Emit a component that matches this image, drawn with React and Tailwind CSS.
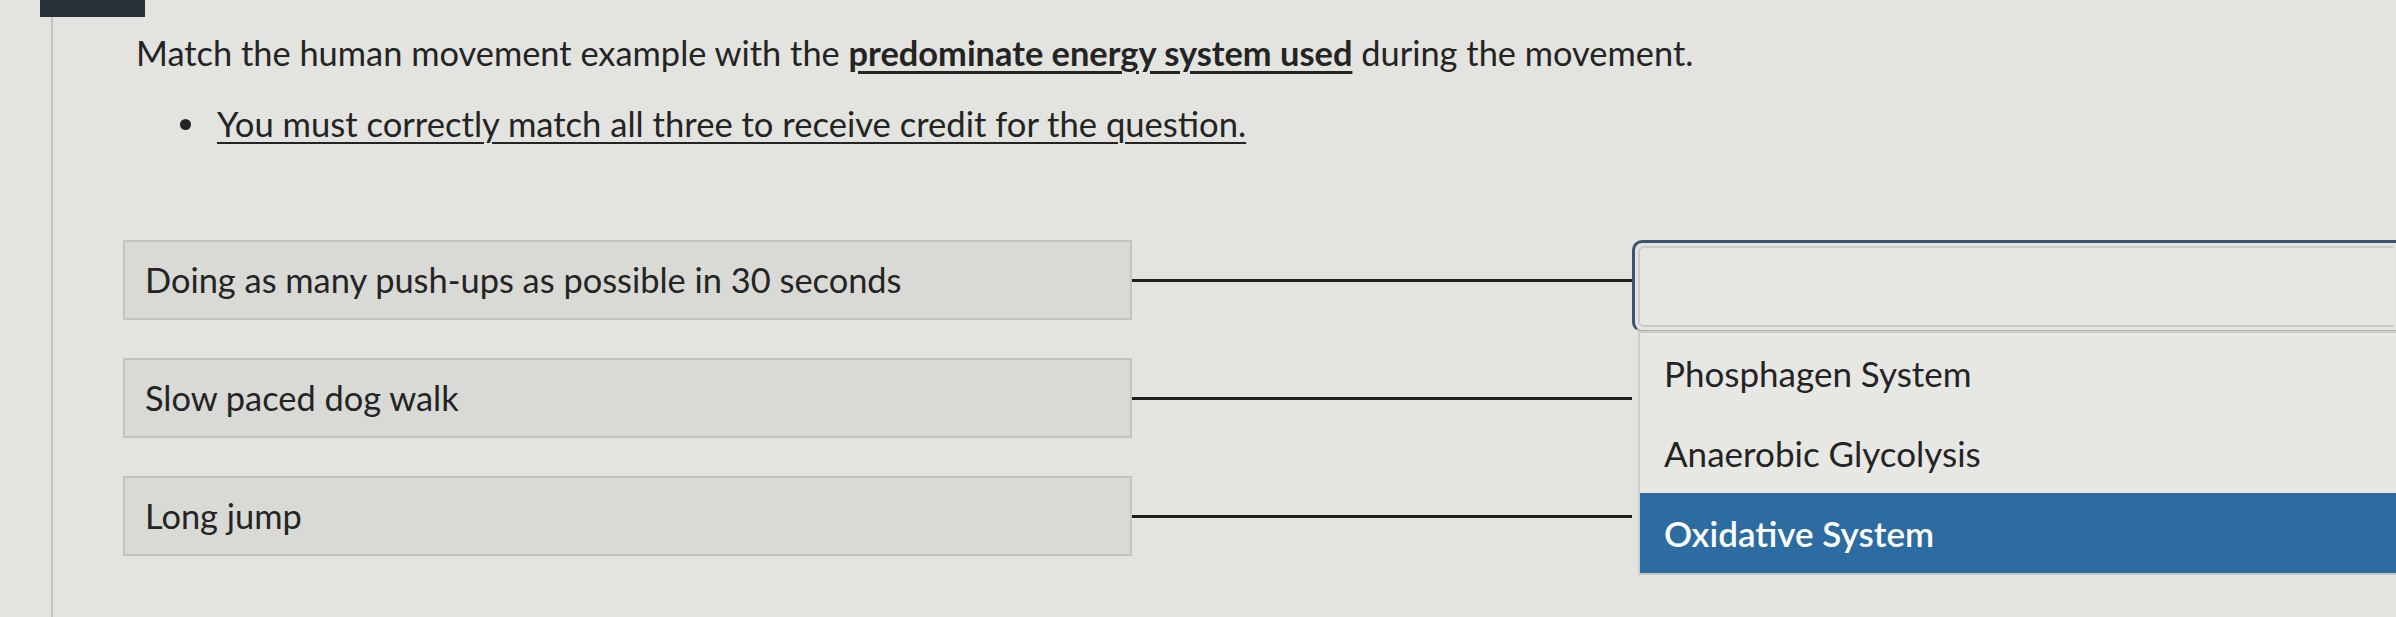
export default function App() {
  const items = [
    { label: 'Doing as many push-ups as possible in 30 seconds', first: true },
    { label: 'Slow paced dog walk' },
    { label: 'Long jump' },
  ];
  const options = ['Phosphagen System', 'Anaerobic Glycolysis', 'Oxidative System'];

  return (
    <div
      className="w-[2396px] h-[617px] overflow-hidden bg-[#e3e3e0] text-[#242424] flex flex-col"
      style={{ fontFamily: 'Lato, "Open Sans", sans-serif' }}
    >
      {/* top bar piece */}
      <div className="h-[17px] shrink-0">
        <div className="ml-[40px] w-[105px] h-[17px] bg-[#2a3038]" />
      </div>

      {/* question body */}
      <div className="flex-1 ml-[51px] border-l-2 border-[#c2c2bf] pl-[70px] pt-[16px]">
        <p className="ml-[13px] text-[34.4px] leading-[40px] whitespace-nowrap">
          Match the human movement example with the{' '}
          <span className="font-bold underline decoration-[3px] underline-offset-[5px]">predominate energy system used</span>{' '}
          during the movement.
        </p>

        <div className="mt-[31px] ml-[57px] flex items-center gap-[26px] text-[34.6px] leading-[40px]">
          <span className="w-[11px] h-[11px] rounded-full bg-[#242424]" />
          <span className="underline decoration-2 underline-offset-[5px] whitespace-nowrap">
            You must correctly match all three to receive credit for the question.
          </span>
        </div>

        {/* matching rows */}
        <div className="mt-[96px] flex flex-col gap-[38px]">
          {items.map((item) => (
            <div key={item.label} className="h-[80px] flex items-start">
              <div className="w-[1009px] h-[80px] shrink-0 bg-[#d9d9d6] border-2 border-[#c3c3c0] flex items-center pl-[20px] text-[34.4px] whitespace-nowrap">
                {item.label}
              </div>
              <div className="h-[80px] flex items-center">
                <div className="w-[500px] h-[3px] bg-[#1f1f1f]" />
              </div>
              {item.first && (
                <div className="relative flex-1 h-[92px] z-10">
                  <div className="h-full border-t-[3px] border-l-[3px] border-b-2 border-[#3b546d] border-b-[#b3b3b1] rounded-l-[10px] p-[3px]">
                    <div className="h-full border-2 border-r-0 border-[#c9c9c6] rounded-l-[6px] bg-[#e6e6e3]" />
                  </div>
                  {/* open dropdown list */}
                  <div className="absolute top-[91px] left-[6px] right-0 bg-[#e7e7e4] border-l-2 border-t-2 border-[#cdcdca] border-b-2 border-b-[#c6c6c3]">
                    {options.map((opt, i) => (
                      <div
                        key={opt}
                        className={
                          i === 2
                            ? 'h-[80px] flex items-center pl-[24px] text-[35px] bg-[#2c6ca1] text-white font-semibold'
                            : 'h-[80px] flex items-center pl-[24px] text-[35px]'
                        }
                      >
                        {opt}
                      </div>
                    ))}
                  </div>
                </div>
              )}
            </div>
          ))}
        </div>
      </div>
    </div>
  );
}
